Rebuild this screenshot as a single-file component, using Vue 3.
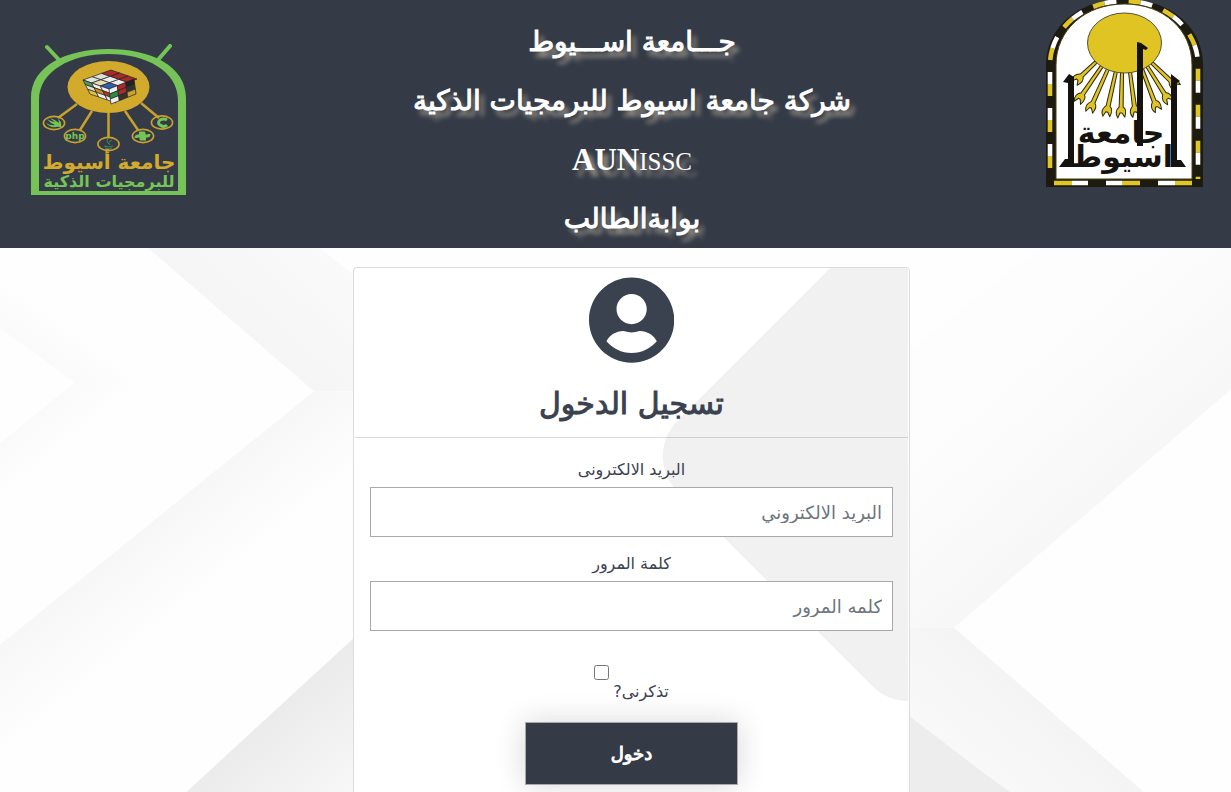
<template>
  <div class="page">
    <!-- header -->
    <header class="site-header">
      <svg class="company-logo" viewBox="0 0 158 152" role="img" aria-label="شعار الشركة">
        <path
          fill="#76c457"
          fill-rule="evenodd"
          d="M1 151V54C1 22 36 5 78.500 5S156 22 156 54V151ZM9 147V56C9 27 41 10 78.500 10S148 27 148 56V147Z"
        />
        <path d="M17 3 31 18M140 2 127 17" stroke="#76c457" stroke-width="4" stroke-linecap="round" />
        <path
          d="M47 60 28 74M62 67 50 86M78.500 69V94M95 67 108 86M111 59 129 74"
          stroke="#c9a22d"
          stroke-width="2.500"
        />
        <ellipse cx="78.500" cy="43" rx="41" ry="26" fill="#d2aa2c" />
        <g stroke="#222" stroke-width="0.700">
          <path
            v-for="(tile, i) in cubeTiles"
            :key="i"
            :d="tile.d"
            :fill="tile.fill"
          />
        </g>
        <g fill="none" stroke="#c9a22d" stroke-width="1.600">
          <ellipse v-for="n in nodes" :key="n.x" :cx="n.x" :cy="n.y" rx="10.600" ry="6.600" />
        </g>
        <path fill="#76c457" d="M17 75Q22 78 25 78Q22 76 20 74Q26 76 29 79Q29 77 28 75Q32 78 31 81L32 84Q29 82 26 83Q20 84 16 79Q21 82 25 81Q20 79 17 75Z" />
        <text class="logo-php" x="45" y="95" text-anchor="middle">php</text>
        <path d="M79 94Q75 97 79 100M82 96Q77 98 80 101M74 102Q79 104 83 102M75 104Q79 106 82 104" fill="none" stroke="#3f8a58" stroke-width="1" />
        <path d="M109 89H114V92H108Q106 92 106 94M116 95H111V92H117Q119 92 119 90" fill="none" stroke="#76c457" stroke-width="3" stroke-linejoin="round" />
        <path d="M137 76Q134 74 130 76Q127 79 130 81Q134 84 137 81" fill="none" stroke="#76c457" stroke-width="3" />
        <text class="logo-name" x="79" y="125" text-anchor="middle">جامعة أسيوط</text>
        <text class="logo-sub" x="79" y="143" text-anchor="middle">للبرمجيات الذكية</text>
      </svg>

      <div class="titles">
        <h1>جـــامعة اســـيوط</h1>
        <h1>شركة جامعة اسيوط للبرمجيات الذكية</h1>
        <p class="latin"><b>AUN</b>ISSC</p>
        <h1>بوابةالطالب</h1>
      </div>

      <svg class="university-logo" viewBox="0 0 159 189" role="img" aria-label="شعار جامعة اسيوط">
        <path d="M1 188V66C1 28 34 0 79.500 0S158 28 158 66V188Z" fill="#1d1a10" />
        <g fill="none" stroke-width="4.600">
          <path :d="band" stroke="#e0c526" stroke-dasharray="12 24" stroke-dashoffset="-11" />
          <path :d="band" stroke="#fff" stroke-dasharray="12 24" stroke-dashoffset="-23" />
          <path d="M9 184H27M77 184H95M130 184H147" stroke="#e0c526" />
          <path d="M27 184H43M61 184H77M113 184H130" stroke="#fff" />
        </g>
        <path d="M11 180V66C11 31 40 5 79.500 5S147 31 147 66V180Z" fill="#fff" stroke="#4a3f0c" stroke-width="1" />
        <g v-for="(ray, i) in rays" :key="i" :transform="rayTransform(ray)">
          <path
            :d="rayPath(ray)"
            fill="#dfc424"
            stroke="#2a2610"
            stroke-width="1"
            stroke-linejoin="round"
          />
        </g>
        <ellipse cx="79.500" cy="44" rx="37" ry="30" fill="#dfc424" stroke="#55503a" stroke-width="1" />
        <path
          fill="#15130f"
          d="M92 43 96 44 103 49 101 51 98 50V147H92ZM18 83 24 75 29 78V168H14L20 160H23V84ZM126 75 135 82 132 84V161H136L141 168H126Z"
        />
        <text class="kufi" x="76" y="144" text-anchor="middle">جامعة</text>
        <text class="kufi" x="77" y="168" text-anchor="middle">اسيوط</text>
      </svg>
    </header>

    <!-- login -->
    <main class="content">
      <svg class="backdrop" viewBox="0 0 1231 561" preserveAspectRatio="none" aria-hidden="true">
        <defs>
          <linearGradient
            v-for="g in fades"
            :id="g.id"
            :key="g.id"
            gradientUnits="userSpaceOnUse"
            :x1="g.from[0]"
            :y1="g.from[1]"
            :x2="g.to[0]"
            :y2="g.to[1]"
          >
            <stop offset="0" :stop-color="g.start" />
            <stop offset="1" :stop-color="g.end" />
          </linearGradient>
        </defs>
        <rect width="1231" height="561" fill="#fefefe" />
        <path d="M148 0H320L420 80V143H314Z" fill="url(#fade-top)" />
        <path d="M0 396 314 143H420V300L0 561Z" fill="url(#fade-middle)" />
        <path d="M0 80 75 134H150V100L0 10Z" fill="url(#fade-tip-top)" />
        <path d="M75 134 0 195V270L150 165V134Z" fill="url(#fade-tip-bottom)" />
        <path d="M167 561 353 390 420 330V561Z" fill="url(#fade-corner)" />
        <path d="M1040 0 900 110V379H954L1231 141V0Z" fill="url(#fade-right)" />
        <path d="M900 379H954L1145 544 1165 561H900Z" fill="url(#fade-right-low)" />
        <path d="M900 460 977 519 1035 561H900Z" fill="#ededed" />
      </svg>

      <section class="card">
        <div class="card-inner">
          <div class="card-heading">
            <svg class="avatar" viewBox="0 0 496 512" aria-hidden="true">
              <path
                fill="currentColor"
                d="M248 8C111 8 0 119 0 256s111 248 248 248 248-111 248-248S385 8 248 8zm0 96c48.600 0 88 39.400 88 88s-39.400 88-88 88-88-39.400-88-88 39.400-88 88-88zm0 344c-58.700 0-111.300-26.600-146.500-68.200 18.800-35.400 55.600-59.800 98.500-59.800 2.400 0 4.800.4 7.100 1.100 13 4.200 26.600 6.900 40.900 6.900 14.300 0 28-2.700 40.900-6.900 2.300-.7 4.700-1.100 7.100-1.100 42.900 0 79.700 24.400 98.500 59.800C359.300 421.400 306.700 448 248 448z"
              />
            </svg>
            <h2>تسجيل الدخول</h2>
          </div>

          <form class="login-form" @submit.prevent>
            <div class="field">
              <label for="email">البريد الالكترونى</label>
              <input id="email" v-model="email" type="email" placeholder="البريد الالكتروني" />
            </div>
            <div class="field">
              <label for="password">كلمة المرور</label>
              <input id="password" v-model="password" type="password" placeholder="كلمه المرور" />
            </div>
            <div class="remember">
              <input id="remember" v-model="remember" type="checkbox" />
              <label for="remember">تذكرنى?</label>
            </div>
            <button type="submit" class="submit">دخول</button>
          </form>
        </div>
      </section>
    </main>
  </div>
</template>

<script setup>
import { ref } from 'vue';

const email = ref('');
const password = ref('');
const remember = ref(false);

// the five technology badges under the cube
const nodes = [
  { x: 24, y: 79 },
  { x: 45, y: 92 },
  { x: 78.5, y: 100 },
  { x: 113, y: 92 },
  { x: 132, y: 78.5 },
];

// one face of the cube: origin, two edge vectors, nine colours
const face = (o, u, v, colors) =>
  colors.map((fill, i) => {
    const a = i % 3;
    const b = Math.floor(i / 3);
    const at = (s, t) => `${o[0] + (u[0] * s + v[0] * t) / 3} ${o[1] + (u[1] * s + v[1] * t) / 3}`;
    return { fill, d: `M${at(a, b)}L${at(a + 1, b)}L${at(a + 1, b + 1)}L${at(a, b + 1)}Z` };
  });

const cubeTiles = [
  ...face([53, 36], [28, -10], [26, 9], ['#dfe6e4', '#ddd', '#a82b2b', '#e8ddb0', '#eee', '#a82b2b', '#2c5fb4', '#eee', '#a82b2b']),
  ...face([53, 36], [26, 9], [7, 14], ['#4f9a5d', '#eee', '#eee', '#ddd', '#c98b2b', '#a83a2b', '#e3c640', '#eee', '#eee']),
  ...face([79, 45], [25, -10], [2, 15], ['#eee', '#a82b2b', '#222', '#2e8b45', '#a82b2b', '#333', '#eee', '#333', '#c9a22d']),
];

// dashed strip of the university arch
const band = 'M5 180V66C5 31 37 2 79.500 2S153 31 153 66V180';

// sun rays, from the disc out to the wrench head
const rays = [
  [51, 63, 33, 80],
  [57, 67, 35, 99],
  [63, 70, 46, 108],
  [71, 72, 62, 112],
  [77, 73, 76, 113],
  [85, 73, 90, 112],
  [97, 70, 111, 107],
  [102, 67, 122, 99],
  [107, 64, 129, 85],
];

const rayTransform = ([x1, y1, x2, y2]) => {
  const angle = (Math.atan2(y2 - y1, x2 - x1) * 180) / Math.PI;
  return `translate(${x1} ${y1}) rotate(${angle})`;
};

const rayPath = ([x1, y1, x2, y2]) => {
  const len = Math.hypot(x2 - x1, y2 - y1);
  return `M0-1.500 ${len - 5}-2Q${len - 3}-6 ${len + 5}-4L${len + 1}-1V1L${len + 6} 3Q${len} 7 ${len - 5} 2L0 1.500Z`;
};

// soft grey gradients of the backdrop
const fades = [
  { id: 'fade-top', from: [230, 80], to: [330, -30], start: '#f5f5f5', end: '#fbfbfb' },
  { id: 'fade-middle', from: [160, 268], to: [215, 336], start: '#f7f7f7', end: '#fefefe' },
  { id: 'fade-tip-top', from: [37, 106], to: [62, 72], start: '#fafafa', end: '#fefefe' },
  { id: 'fade-tip-bottom', from: [37, 165], to: [65, 199], start: '#fafafa', end: '#fefefe' },
  { id: 'fade-corner', from: [270, 466], to: [360, 570], start: '#ebebeb', end: '#fafafa' },
  { id: 'fade-right', from: [1090, 262], to: [990, 146], start: '#f7f7f7', end: '#fdfdfd' },
  { id: 'fade-right-low', from: [1050, 461], to: [970, 554], start: '#f4f4f4', end: '#fafafa' },
];
</script>

<style>
body {
  margin: 0;
}
</style>

<style scoped>
.page {
  min-height: 100vh;
  display: flex;
  flex-direction: column;
  color: #3a414f;
  font-family: "DejaVu Sans", sans-serif;
}

/* header */
.site-header {
  display: grid;
  grid-template-columns: 1fr auto 1fr;
  align-items: start;
  padding: 0 27px 0 30px;
  background: #343a46;
}

.company-logo {
  width: 158px;
  height: 152px;
  margin-top: 44px;
  fill: none;
}

.university-logo {
  width: 159px;
  height: 189px;
  margin-top: -1px;
  justify-self: end;
}

.titles {
  padding: 12px 0 0 30px;
  color: #fff;
  text-align: center;
  text-shadow: 5px 6px 5px rgba(190, 180, 160, 0.8);
}

.titles h1,
.titles p {
  height: 59px;
  margin: 0;
  font-size: 28px;
  font-weight: 400;
  line-height: 60px;
  direction: rtl;
}

.titles h1 {
  -webkit-text-stroke: 1px #fff;
}

.titles .latin {
  font-family: "Liberation Serif", serif;
  font-size: 25px;
  direction: ltr;
}

.latin b {
  font-size: 31px;
}

.logo-php {
  fill: #76c457;
  font: bold 9px "DejaVu Sans", sans-serif;
}

.logo-name {
  fill: #d2aa2c;
  font: bold 20px "DejaVu Sans", sans-serif;
}

.logo-sub {
  fill: #76c457;
  font: bold 16px "DejaVu Sans", sans-serif;
}

.kufi {
  fill: #15130f;
  font: bold 30px "DejaVu Sans", sans-serif;
}

/* login area */
.content {
  flex: 1;
  display: grid;
  grid-template-columns: minmax(0, 1fr);
  justify-items: center;
}

.backdrop,
.card {
  grid-area: 1 / 1;
}

.backdrop {
  width: 100%;
  height: 100%;
  min-height: 0;
}

.card {
  box-sizing: border-box;
  width: calc(100% - 32px);
  max-width: 557px;
  margin: 19px 0 0 32px;
  padding: 0 1px;
  border: 1px solid #dcdcdc;
  border-radius: 4px;
  background: #fff;
  z-index: 1;
}

.card-inner {
  position: relative;
  overflow: hidden;
  padding-bottom: 24px;
}

/* rounded diamond behind the form */
.card-inner::before {
  content: "";
  position: absolute;
  top: 0;
  right: -188px;
  width: 376px;
  height: 376px;
  border-radius: 50px;
  background: #f1f1f1;
  transform: rotate(45deg);
}

.card-heading,
.login-form {
  position: relative;
}

.card-heading {
  display: flex;
  flex-direction: column;
  align-items: center;
  padding-top: 8px;
  border-bottom: 1px solid rgba(0, 0, 0, 0.14);
}

.avatar {
  height: 88px;
}

.card-heading h2 {
  margin: 0;
  padding: 16px 0 9px;
  font-size: 30px;
  font-weight: 500;
  line-height: 48px;
  direction: rtl;
  -webkit-text-stroke: 1px #3a414f;
}

.login-form {
  display: flex;
  flex-direction: column;
  align-items: center;
  padding: 20px 15px 0;
}

.field {
  width: 100%;
  display: flex;
  flex-direction: column;
  margin-bottom: 15px;
  text-align: center;
}

.field label,
.remember label {
  font-size: 16px;
  font-weight: 500;
  line-height: 24px;
  direction: rtl;
}

.field label {
  margin-bottom: 5px;
}

.field input {
  box-sizing: border-box;
  width: 100%;
  height: 50px;
  padding: 0 10px;
  border: 1px solid #a9a9a9;
  background: #fff;
  color: #3a414f;
  font-family: inherit;
  font-size: 18px;
  direction: rtl;
}

.field input::placeholder {
  color: #6c757d;
  opacity: 1;
}

.remember {
  display: grid;
  grid-template-columns: 15px auto;
  column-gap: 4px;
  margin: 19px 0 18px;
}

.remember input {
  width: 15px;
  height: 15px;
  margin: 0;
}

.remember label {
  grid-area: 2 / 2;
}

.submit {
  width: 213px;
  height: 63px;
  border: 1px solid #a9a9a9;
  background: #343a46;
  color: #fff;
  font-family: inherit;
  font-size: 18px;
  font-weight: 400;
  -webkit-text-stroke: 1px #fff;
  box-shadow: 0 0 30px rgba(0, 0, 0, 0.16);
}
</style>
